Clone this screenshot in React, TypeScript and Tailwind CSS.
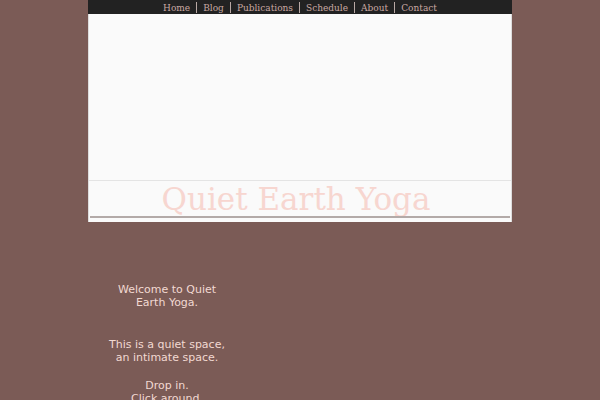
import React from "react";

const links = ["Home", "Blog", "Publications", "Schedule", "About", "Contact"];

export default function App() {
  return (
    <div className="min-h-[400px] w-full bg-[#7b5b56] overflow-hidden">
      <div className="mx-auto w-[424px]">
        <nav className="h-[14px] bg-[#222222] flex justify-center items-start pt-[2px] overflow-hidden" style={{ fontFamily: '"DejaVu Serif", serif' }}>
          {links.map((l, i) => (
            <React.Fragment key={l}>
              {i > 0 && <span className="w-px h-[11px] bg-[#b8a8a4] mx-[6px]" />}
              <a className="text-[9px] leading-[12px] text-[#c9a9a2]">{l}</a>
            </React.Fragment>
          ))}
        </nav>
        <div className="bg-[#fafafa] border-x border-[#dddddd] h-[208px] flex flex-col">
          <div className="h-[166px]" />
          <div className="h-px bg-[#e4e4e4]" />
          <div className="h-[35px] overflow-hidden flex justify-center pr-[8px]">
            <h1 className="text-[31px] leading-[40px] mt-[-2px] text-[#f7d6d0]" style={{ fontFamily: '"DejaVu Serif", serif' }}>Quiet Earth Yoga</h1>
          </div>
          <div className="h-[2px] bg-[#b3aaa8] mx-[1px]" />
          <div className="flex-1" />
        </div>
        <div className="w-[158px] pt-[61px] text-center text-[11px] leading-[13px] text-[#f2d9d2]" style={{ fontFamily: '"DejaVu Sans", sans-serif' }}>
          <p>Welcome to Quiet<br />Earth Yoga.</p>
          <p className="mt-[29px]">This is a quiet space,<br />an intimate space.</p>
          <p className="mt-[15px]">Drop in.<br />Click around.</p>
        </div>
      </div>
    </div>
  );
}
